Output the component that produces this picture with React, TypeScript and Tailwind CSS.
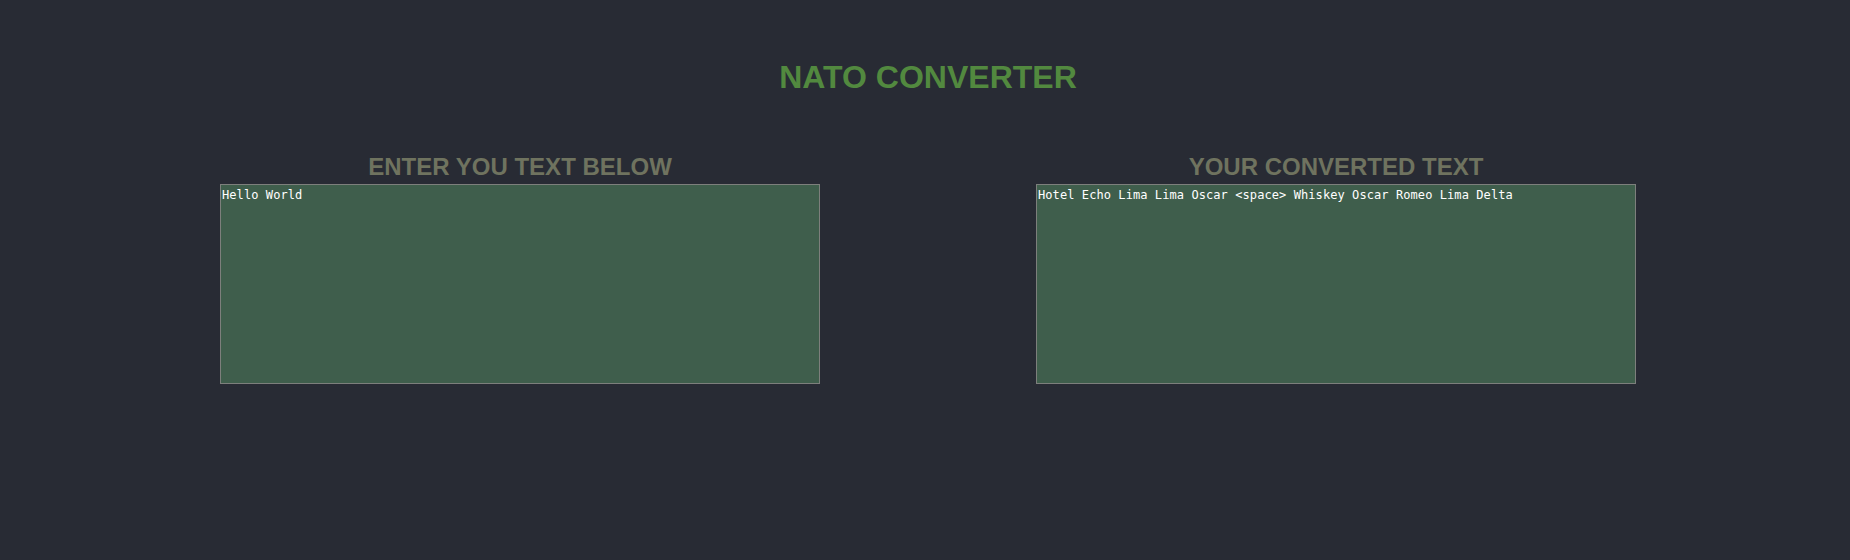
import { useState } from "react";

const NATO: Record<string, string> = {
  a: "Alpha", b: "Bravo", c: "Charlie", d: "Delta", e: "Echo", f: "Foxtrot",
  g: "Golf", h: "Hotel", i: "India", j: "Juliett", k: "Kilo", l: "Lima",
  m: "Mike", n: "November", o: "Oscar", p: "Papa", q: "Quebec", r: "Romeo",
  s: "Sierra", t: "Tango", u: "Uniform", v: "Victor", w: "Whiskey", x: "X-ray",
  y: "Yankee", z: "Zulu",
};

function convert(text: string) {
  return text
    .split("")
    .map((ch) => (ch === " " ? "<space>" : NATO[ch.toLowerCase()] ?? ch))
    .join(" ");
}

export default function App() {
  const [text, setText] = useState("Hello World");

  return (
    <div className="min-h-[560px] w-full bg-[#282b34] pt-[61px] font-['Liberation_Sans',Arial,sans-serif]">
      <h1 className="pl-[6px] text-center text-[32px] font-bold leading-[32px] text-[#52893f]">
        NATO CONVERTER
      </h1>

      <div className="mt-[62px] flex gap-[216px] pl-[220px]">
        <div className="flex w-[600px] flex-col">
          <h2 className="text-center text-[24px] font-bold leading-[24px] text-[#6f735f]">
            ENTER YOU TEXT BELOW
          </h2>
          <textarea
            value={text}
            onChange={(e) => setText(e.target.value)}
            className="mt-[5px] h-[200px] w-[600px] resize-none border border-[#7d7f7c] bg-[#3f5e4c] p-px font-['DejaVu_Sans_Mono',monospace] text-[12px] tracking-[0.08px] text-white outline-none"
          />
        </div>

        <div className="flex w-[600px] flex-col">
          <h2 className="text-center text-[24px] font-bold leading-[24px] text-[#6f735f]">
            YOUR CONVERTED TEXT
          </h2>
          <textarea
            readOnly
            value={convert(text)}
            className="mt-[5px] h-[200px] w-[600px] resize-none border border-[#7d7f7c] bg-[#3f5e4c] p-px font-['DejaVu_Sans_Mono',monospace] text-[12px] tracking-[0.08px] text-white outline-none"
          />
        </div>
      </div>
    </div>
  );
}
